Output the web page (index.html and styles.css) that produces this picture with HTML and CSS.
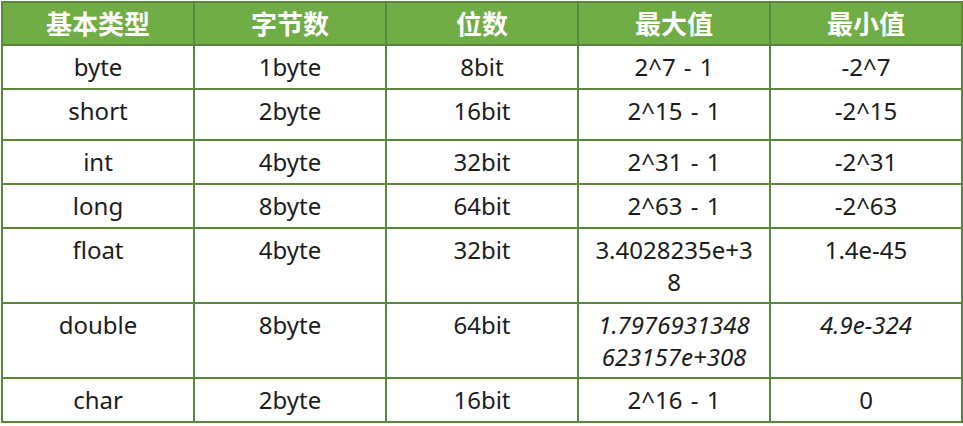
FILE: index.html
```html
<!DOCTYPE html>
<html lang="zh">
<head>
<meta charset="utf-8">
<title>Java 基本类型</title>
<link rel="stylesheet" href="styles.css">
</head>
<body>
<div class="table">
  <div class="cell head">基本类型</div>
  <div class="cell head">字节数</div>
  <div class="cell head">位数</div>
  <div class="cell head">最大值</div>
  <div class="cell head">最小值</div>

  <div class="cell">byte</div>
  <div class="cell">1byte</div>
  <div class="cell">8bit</div>
  <div class="cell">2^7 - 1</div>
  <div class="cell">-2^7</div>

  <div class="cell">short</div>
  <div class="cell">2byte</div>
  <div class="cell">16bit</div>
  <div class="cell">2^15 - 1</div>
  <div class="cell">-2^15</div>

  <div class="cell">int</div>
  <div class="cell">4byte</div>
  <div class="cell">32bit</div>
  <div class="cell">2^31 - 1</div>
  <div class="cell">-2^31</div>

  <div class="cell">long</div>
  <div class="cell">8byte</div>
  <div class="cell">64bit</div>
  <div class="cell">2^63 - 1</div>
  <div class="cell">-2^63</div>

  <div class="cell">float</div>
  <div class="cell">4byte</div>
  <div class="cell">32bit</div>
  <div class="cell">3.4028235e+3<br>8</div>
  <div class="cell">1.4e-45</div>

  <div class="cell">double</div>
  <div class="cell">8byte</div>
  <div class="cell">64bit</div>
  <div class="cell italic">1.7976931348<br>623157e+308</div>
  <div class="cell italic">4.9e-324</div>

  <div class="cell">char</div>
  <div class="cell">2byte</div>
  <div class="cell">16bit</div>
  <div class="cell">2^16 - 1</div>
  <div class="cell">0</div>
</div>
</body>
</html>
```
FILE: styles.css
```css
html, body {
  margin: 0;
  padding: 0;
  background: #ffffff;
}

body {
  padding: 1px 0 0 1px;
  font-family: "Noto Sans", "Noto Sans CJK SC", sans-serif;
  color: #1c1c1c;
}

.table {
  display: grid;
  width: 962px;
  box-sizing: border-box;
  padding: 2px;
  gap: 2px;
  background: #5a873a;
  grid-template-columns: repeat(5, 190px);
  grid-template-rows: 41px 42px 49px 42px 42px 73px 73px 42px;
}

.cell {
  background: #ffffff;
  text-align: center;
  font-size: 24px;
  line-height: 32px;
  padding-top: 5px;
  box-sizing: border-box;
  word-spacing: 2px;
}

.cell.head {
  background: #70ad47;
  color: #ffffff;
  font-family: "Noto Sans CJK SC", sans-serif;
  font-weight: 700;
  font-size: 26px;
  line-height: 32px;
  padding-top: 4px;
  word-spacing: 0;
}

.cell.italic {
  font-style: italic;
}
```
